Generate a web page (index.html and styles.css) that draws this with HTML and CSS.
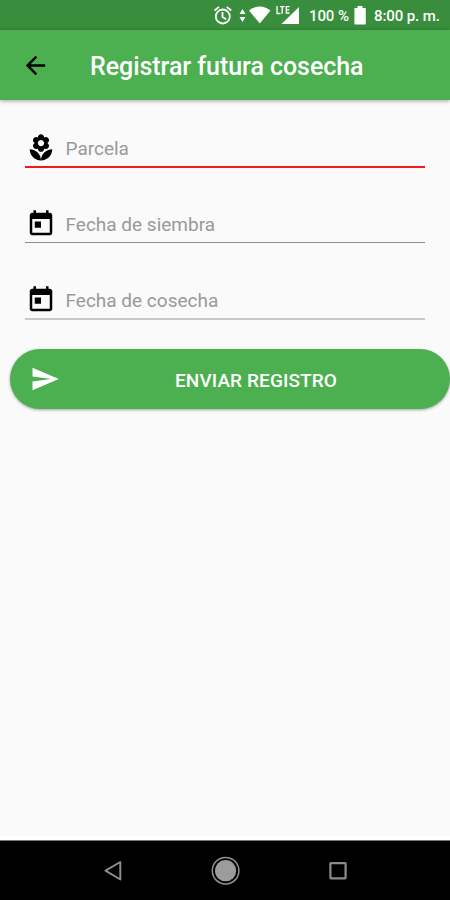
FILE: index.html
```html
<!DOCTYPE html>
<html lang="es">
<head>
<meta charset="utf-8">
<title>Registrar futura cosecha</title>
<link rel="stylesheet" href="styles.css">
</head>
<body>
<div class="screen">
  <div class="status">
    <svg class="signals" viewBox="0 0 90 30">
      <g fill="none" stroke="#fff" stroke-width="1.8">
        <circle cx="12.8" cy="16.5" r="7"/>
        <path d="M12.5 12v5l3.7 2.2M4.500 10.500l4.500-3.600M21.200 10.500l-4.500-3.600"/>
      </g>
      <g fill="#fff">
        <path d="M29.500 14l3-5 3 5zM29.500 17l3 5 3-5z"/>
        <path d="M39 10.500Q49.500 2.500 60.500 10.500L49.800 23.500z"/>
        <path d="M89 7v17H71.500z"/>
      </g>
      <path d="M67 6v7.500h3.500M70 6.700h4.500M72.200 6.700v7M79.500 6.700h-3.200v6.300h3.200M76.300 9.800h3" fill="none" stroke="#fff" stroke-width="1.300"/>
    </svg>
    <span class="percent">100 %</span>
    <svg class="battery" viewBox="0 0 12 20"><path d="M3.500 0h5v2H11a.8.8 0 0 1 .8.8v15a.8.8 0 0 1-.8.8H1.200a.8.8 0 0 1-.8-.8v-15A.8.8 0 0 1 1.200 2h2.300z" fill="#fff"/></svg>
    <span class="clock">8:00 p. m.</span>
  </div>
  <header class="appbar">
    <svg class="back" viewBox="0 0 24 24"><path d="M20 11H7.830l5.590-5.590L12 4l-8 8 8 8 1.410-1.410L7.830 13H20v-2z"/></svg>
    <h1>Registrar futura cosecha</h1>
  </header>
  <main>
    <div class="field active">
      <svg class="icon" viewBox="0 0 24 24"><path d="M12 22c4.970 0 9-4.030 9-9-4.970 0-9 4.030-9 9zM5.600 10.250c0 1.380 1.120 2.500 2.500 2.500.53 0 1.010-.16 1.420-.44l-.02.19c0 1.380 1.120 2.500 2.500 2.500s2.500-1.120 2.500-2.500l-.02-.19c.4.280.89.440 1.420.44 1.380 0 2.500-1.120 2.500-2.500 0-1-.59-1.850-1.430-2.250.84-.4 1.430-1.250 1.430-2.250 0-1.380-1.120-2.500-2.500-2.500-.53 0-1.010.16-1.420.44l.02-.19C14.500 2.120 13.380 1 12 1S9.500 2.120 9.500 3.500l.02.19c-.4-.28-.89-.44-1.420-.44-1.380 0-2.500 1.120-2.500 2.500 0 1 .59 1.850 1.430 2.250-.84.4-1.430 1.250-1.430 2.250zM12 5.500c1.380 0 2.500 1.120 2.500 2.500s-1.120 2.500-2.500 2.500S9.500 9.380 9.500 8s1.120-2.500 2.500-2.500zM3 13c0 4.970 4.030 9 9 9 0-4.970-4.030-9-9-9z"/></svg>
      <span class="label">Parcela</span>
    </div>
    <div class="field">
      <svg class="icon" viewBox="0 0 24 24"><path d="M19 3h-1V1h-2v2H8V1H6v2H5c-1.110 0-1.990.9-1.990 2L3 19c0 1.100.89 2 2 2h14c1.100 0 2-.9 2-2V5c0-1.100-.9-2-2-2zm0 16H5V8h14v11zM7 10h5v5H7z"/></svg>
      <span class="label">Fecha de siembra</span>
    </div>
    <div class="field last">
      <svg class="icon" viewBox="0 0 24 24"><path d="M19 3h-1V1h-2v2H8V1H6v2H5c-1.110 0-1.990.9-1.990 2L3 19c0 1.100.89 2 2 2h14c1.100 0 2-.9 2-2V5c0-1.100-.9-2-2-2zm0 16H5V8h14v11zM7 10h5v5H7z"/></svg>
      <span class="label">Fecha de cosecha</span>
    </div>
    <button class="submit" type="button">
      <svg class="send" viewBox="0 0 24 24"><path d="M2.010 21L23 12 2.010 3 2 10l15 2-15 2z" fill="#fff"/></svg>
      <span>ENVIAR REGISTRO</span>
    </button>
  </main>
  <nav class="navbar">
    <svg viewBox="0 0 30 30"><path d="M7.500 14.600L22.300 6v17.500z" fill="none" stroke="#8c8c8c" stroke-width="2" stroke-linejoin="round"/></svg>
    <svg viewBox="0 0 30 30"><circle cx="14.600" cy="14.700" r="13.300" fill="none" stroke="#929292" stroke-width="1.500"/><circle cx="14.600" cy="14.700" r="10.600" fill="#9c9c9c"/></svg>
    <svg viewBox="0 0 30 30"><rect x="7.400" y="7.100" width="15.200" height="15.200" rx=".5" fill="none" stroke="#8c8c8c" stroke-width="2.200"/></svg>
  </nav>
</div>
</body>
</html>
```

FILE: styles.css
```css
* { box-sizing: border-box; }
body { margin: 0; font-family: Roboto, "Liberation Sans", sans-serif; }
svg { display: block; flex: none; }

.screen {
  width: 450px;
  height: 900px;
  display: flex;
  flex-direction: column;
  background: #fafafa;
  overflow: hidden;
}

.status {
  height: 30px;
  flex: none;
  display: flex;
  align-items: center;
  padding-left: 210px;
  background: #388e3c;
  color: #fff;
  font-size: 15px;
  font-weight: 500;
  white-space: nowrap;
}
.signals { width: 90px; height: 30px; }
.percent { width: 40px; margin: 2px 0 0 9px; letter-spacing: -.1px; }
.battery { width: 12px; height: 20px; margin: 2px 0 0 5px; }
.clock { margin: 2px 0 0 8px; letter-spacing: -.1px; }

.appbar {
  height: 70px;
  flex: none;
  display: flex;
  align-items: center;
  padding-left: 21px;
  background: #4caf50;
  box-shadow: 0 1px 4px rgba(0, 0, 0, .35);
}
.back { width: 29px; height: 29px; }
h1 {
  margin: 4px 0 0 40px;
  color: #fff;
  font-size: 25px;
  font-weight: 500;
  line-height: 30px;
  letter-spacing: -.05px;
  white-space: nowrap;
}

main { flex: 1; padding: 24px 0 0; border-bottom: 4px solid #fff; }
.field {
  width: 400px;
  height: 43px;
  margin: 0 0 33px 25px;
  display: flex;
  align-items: flex-start;
  padding-top: 9px;
  border-bottom: 1px solid #8c8c8c;
}
.field.active { height: 44px; margin-bottom: 32px; border-bottom: 2px solid #ee1c1c; }
.field.last { height: 44px; margin-bottom: 29px; border-bottom: 2px solid #c8c8c8; }
.icon { width: 30px; height: 30px; margin-left: .5px; }
.label {
  margin: 4px 0 0 10px;
  color: #999;
  font-size: 19px;
  line-height: 24px;
  white-space: nowrap;
}

.submit {
  width: 440px;
  height: 60px;
  margin: 0 0 0 10px;
  padding: 0 0 0 20px;
  display: flex;
  align-items: center;
  border: 0;
  border-radius: 30px;
  background: #4caf50;
  box-shadow: 0 1px 3px rgba(0, 0, 0, .35);
  color: #fff;
  font: 500 19px Roboto, "Liberation Sans", sans-serif;
  letter-spacing: .1px;
  white-space: nowrap;
}
.send { width: 30px; height: 30px; }
.submit span { margin: 2px 0 0 115px; }

.navbar {
  height: 60px;
  flex: none;
  display: flex;
  align-items: center;
  justify-content: space-between;
  padding: 0 97px 0 98px;
  background: #000;
  border-top: 1px solid #777;
}
.navbar svg { width: 30px; height: 30px; }
```
